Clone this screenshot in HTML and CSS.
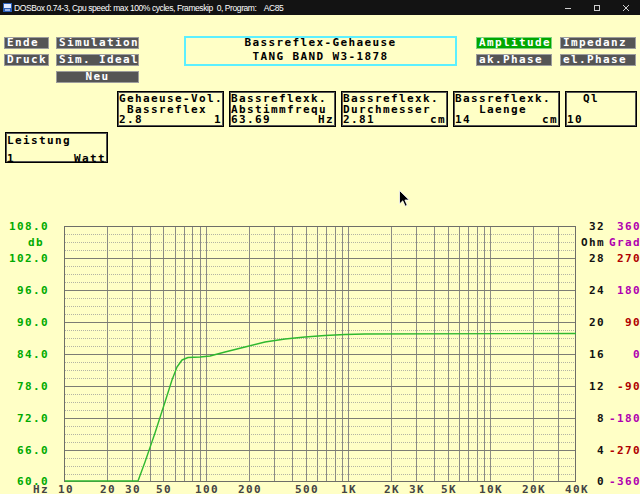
FILE: index.html
```html
<!DOCTYPE html>
<html lang="de">
<head>
<meta charset="utf-8">
<title>DOSBox AC85</title>
<link rel="stylesheet" href="styles.css">
</head>
<body>
<header class="titlebar">
  <svg class="app-icon" viewBox="0 0 9 9" width="9" height="9"><rect x="0" y="0" width="9" height="9" fill="#2a5fb8"/><rect x="1" y="1" width="7" height="4" fill="#dfe8ff"/><rect x="2" y="6" width="5" height="2" fill="#9fb6e8"/></svg>
  <span class="title">DOSBox 0.74-3, Cpu speed: max 100% cycles, Frameskip  0, Program:    AC85</span>
  <div class="winctl">
    <span class="ctl"><svg viewBox="0 0 6 6" width="6" height="6"><path d="M0 3.5H6" stroke="#cfcfcf" stroke-width="1"/></svg></span>
    <span class="ctl"><svg viewBox="0 0 6 6" width="6" height="6"><rect x="0.5" y="0.5" width="5" height="5" fill="none" stroke="#cfcfcf" stroke-width="1"/></svg></span>
    <span class="ctl"><svg viewBox="0 0 6 6" width="6" height="6"><path d="M0 0L6 6M6 0L0 6" stroke="#cfcfcf" stroke-width="1"/></svg></span>
  </div>
</header>

<main class="screen dos">
  <section class="row-top">
    <div class="btn-grid left">
      <div class="btn">Ende</div>
      <div class="btn">Simulation</div>
      <div class="btn">Druck</div>
      <div class="btn">Sim. Ideal</div>
      <div class="btn btn-wide center">Neu</div>
    </div>
    <div class="titlebox">
      <div class="tl first">Bassreflex-Gehaeuse</div>
      <div class="tl">TANG BAND W3-1878</div>
    </div>
    <div class="btn-grid right">
      <div class="btn active">Amplitude</div>
      <div class="btn">Impedanz</div>
      <div class="btn">ak.Phase</div>
      <div class="btn">el.Phase</div>
    </div>
  </section>

  <section class="row-params">
    <div class="pbox">
      <div class="pl">Gehaeuse-Vol.</div>
      <div class="pl"> Bassreflex</div>
      <div class="pl split"><span>2.8</span><span>1</span></div>
    </div>
    <div class="pbox">
      <div class="pl">Bassreflexk.</div>
      <div class="pl">Abstimmfrequ</div>
      <div class="pl split"><span>63.69</span><span>Hz</span></div>
    </div>
    <div class="pbox">
      <div class="pl">Bassreflexk.</div>
      <div class="pl">Durchmesser</div>
      <div class="pl split"><span>2.81</span><span>cm</span></div>
    </div>
    <div class="pbox">
      <div class="pl">Bassreflexk.</div>
      <div class="pl">   Laenge</div>
      <div class="pl split"><span>14</span><span>cm</span></div>
    </div>
    <div class="pbox narrow">
      <div class="pl">  Ql</div>
      <div class="pl"> </div>
      <div class="pl split"><span>10</span><span></span></div>
    </div>
  </section>

  <section class="row-power">
    <div class="pbox power">
      <div class="pl">Leistung</div>
      <div class="pl"> </div>
      <div class="pl split"><span>1</span><span>Watt</span></div>
    </div>
  </section>

  <svg class="chart" viewBox="0 200 640 294" width="640" height="294">
    <path class="g-minor" d="M65 234.5H576M65 242.5H576M65 250.5H576M65 266.5H576M65 274.5H576M65 282.5H576M65 298.5H576M65 306.5H576M65 314.5H576M65 330.5H576M65 338.5H576M65 346.5H576M65 362.5H576M65 370.5H576M65 378.5H576M65 394.5H576M65 402.5H576M65 410.5H576M65 426.5H576M65 434.5H576M65 442.5H576M65 458.5H576M65 466.5H576M65 474.5H576"/>
    <path class="g-vert" d="M107.5 227V481M132.5 227V481M150.5 227V481M163.5 227V481M175.5 227V481M184.5 227V481M192.5 227V481M200.5 227V481M206.5 227V481M249.5 227V481M274.5 227V481M292.5 227V481M306.5 227V481M317.5 227V481M326.5 227V481M335.5 227V481M342.5 227V481M348.5 227V481M391.5 227V481M416.5 227V481M434.5 227V481M448.5 227V481M459.5 227V481M468.5 227V481M477.5 227V481M484.5 227V481M490.5 227V481M533.5 227V481M558.5 227V481"/>
    <path class="g-major" d="M65 258.5H576M65 290.5H576M65 322.5H576M65 354.5H576M65 386.5H576M65 418.5H576M65 450.5H576"/>
    <rect class="g-frame" x="64.5" y="226.5" width="511" height="255"/>
    <polyline class="curve" points="65,481 138,481 145,462 155,433 165,402 172,380 177,367 182,360 188,357.5 200,357 210,356 225,352 245,347 265,342 285,339 305,337 325,335.5 345,334.5 365,334 576,333.5"/>

    <g class="lbl green" text-anchor="end">
      <text x="49" y="230">108.0</text>
      <text x="49" y="262">102.0</text>
      <text x="49" y="294">96.0</text>
      <text x="49" y="326">90.0</text>
      <text x="49" y="358">84.0</text>
      <text x="49" y="390">78.0</text>
      <text x="49" y="422">72.0</text>
      <text x="49" y="454">66.0</text>
      <text x="49" y="485">60.0</text>
    </g>
    <text class="lbl green" x="28" y="246">db</text>

    <g class="lbl black" text-anchor="end">
      <text x="605" y="230">32</text>
      <text x="605" y="246">Ohm</text>
      <text x="605" y="262">28</text>
      <text x="605" y="294">24</text>
      <text x="605" y="326">20</text>
      <text x="605" y="358">16</text>
      <text x="605" y="390">12</text>
      <text x="605" y="422">8</text>
      <text x="605" y="454">4</text>
      <text x="605" y="485">0</text>
    </g>
    <g class="lbl" text-anchor="end">
      <text class="magenta" x="641" y="230">360</text>
      <text class="magenta" x="641" y="246">Grad</text>
      <text class="red" x="641" y="262">270</text>
      <text class="magenta" x="641" y="294">180</text>
      <text class="red" x="641" y="326">90</text>
      <text class="magenta" x="641" y="358">0</text>
      <text class="red" x="641" y="390">-90</text>
      <text class="magenta" x="641" y="422">-180</text>
      <text class="red" x="641" y="454">-270</text>
      <text class="magenta" x="641" y="485">-360</text>
    </g>

    <text class="lbl gray" x="33" y="493">Hz</text>
    <g class="lbl gray" text-anchor="middle">
      <text x="66" y="493">10</text>
      <text x="108" y="493">20</text>
      <text x="133" y="493">30</text>
      <text x="164" y="493">50</text>
      <text x="207" y="493">100</text>
      <text x="250" y="493">200</text>
      <text x="307" y="493">500</text>
      <text x="349" y="493">1K</text>
      <text x="392" y="493">2K</text>
      <text x="417" y="493">3K</text>
      <text x="449" y="493">5K</text>
      <text x="491" y="493">10K</text>
      <text x="534" y="493">20K</text>
      <text x="577" y="493">40K</text>
    </g>
  </svg>

  <svg class="cursor" viewBox="0 0 11 17" width="11" height="17"><path d="M0.5 0.5V14L3.8 10.8L6.2 16.2L8.2 15.3L5.9 10H10.2Z" fill="#000" stroke="#fff" stroke-width="0.8"/></svg>
</main>
</body>
</html>
```

FILE: styles.css
```css
* { box-sizing: border-box; }
html, body { margin: 0; padding: 0; }
body {
  width: 640px;
  height: 494px;
  overflow: hidden;
  background: #ffffc6;
  position: relative;
}

.titlebar {
  height: 15px;
  background: #131313;
  display: flex;
  align-items: center;
  color: #ffffff;
  font-family: "Liberation Sans", Arial, sans-serif;
  font-size: 8.5px;
}
.app-icon { margin: 0 2px 0 3px; flex: none; }
.title { white-space: pre; flex: 1; letter-spacing: -0.42px; }
.winctl { display: flex; height: 15px; }
.ctl { width: 29px; display: flex; align-items: center; justify-content: center; }

.dos {
  font-family: "DejaVu Sans Mono", "Liberation Mono", monospace;
  font-weight: bold;
  font-size: 11px;
  letter-spacing: 1.38px;
  color: #000;
}

.screen { position: relative; height: 479px; }

.row-top {
  display: flex;
  align-items: flex-start;
  padding-top: 22px;
  padding-left: 4px;
}
.btn-grid { display: grid; column-gap: 7px; row-gap: 5px; }
.btn-grid.left { grid-template-columns: 45px 83px; }
.btn-grid.right { grid-template-columns: 76px 76px; column-gap: 8px; margin-left: 19px; }
.btn {
  height: 12px;
  border: 1px solid #9c9c9c;
  background: #555555;
  color: #ffffff;
  line-height: 10px;
  padding-left: 2px;
  white-space: pre;
  overflow: hidden;
}
.btn.active { background: #00a800; border-color: #7fd27f; }
.btn-wide { grid-column: 2; }
.center { text-align: center; padding-left: 0; }

.titlebox {
  margin-left: 45px;
  margin-top: -1px;
  width: 273px;
  height: 30px;
  border: 2px solid #5cf0ff;
  text-align: center;
  line-height: 14px;
  overflow: hidden;
}
.tl { white-space: pre; height: 14px; }
.tl.first { margin-top: -2px; }

.row-params {
  display: flex;
  gap: 5px;
  margin-top: 8px;
  padding-left: 117px;
}
.pbox {
  width: 107px;
  height: 36px;
  border: 1px solid #000;
  box-shadow: inset 1px 1px 0 #555, inset -1px -1px 0 #555;
  padding: 2px 1px 0 1px;
  line-height: 10.5px;
}
.pbox.narrow { width: 72px; }
.pl { white-space: pre; height: 10.5px; }
.split { display: flex; justify-content: space-between; }

.row-power { margin-top: 5px; padding-left: 5px; }
.pbox.power { width: 103px; height: 31px; padding-top: 3px; line-height: 9px; }
.pbox.power .pl { height: 9px; }

.chart { display: block; margin-top: 37px; }
.g-minor { stroke: #b4b4a4; stroke-width: 1; stroke-dasharray: 1 1; fill: none; }
.g-vert { stroke: #8c8c84; stroke-width: 1; fill: none; }
.g-major { stroke: #7c7c74; stroke-width: 1; fill: none; }
.g-frame { stroke: #6e6e68; stroke-width: 1; fill: none; }
.curve { stroke: #2fb82f; stroke-width: 1.4; fill: none; stroke-linejoin: round; }

.lbl {
  font-family: "DejaVu Sans Mono", "Liberation Mono", monospace;
  font-weight: bold;
  font-size: 11px;
  letter-spacing: 1.38px;
}
.green { fill: #00aa00; }
.black { fill: #111; }
.gray { fill: #444; }
.magenta { fill: #b000b0; }
.red { fill: #b00000; }

.cursor { position: absolute; left: 399px; top: 175px; }
```
